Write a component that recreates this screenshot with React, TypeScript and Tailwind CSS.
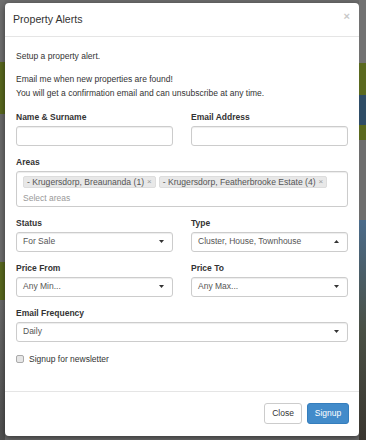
const AREAS = ["- Krugersdorp, Breaunanda (1)", "- Krugersdorp, Featherbrooke Estate (4)"];

function Caret({ up = false }: { up?: boolean }) {
  return (
    <svg width="5" height="3" viewBox="0 0 5 3" className="shrink-0">
      {up ? <path d="M0 3 L2.5 0 L5 3 Z" fill="#333" /> : <path d="M0 0 L5 0 L2.5 3 Z" fill="#333" />}
    </svg>
  );
}

function Label({ children }: { children: React.ReactNode }) {
  return <label className="mb-[3px] block text-[8.5px] font-bold leading-[12px] text-[#333]">{children}</label>;
}

function TextInput() {
  return <div className="h-[20px] rounded-[3px] border border-[#ccc] bg-white shadow-[inset_0_1px_1px_rgba(0,0,0,0.075)]" />;
}

function SelectBox({ value, up = false }: { value: string; up?: boolean }) {
  return (
    <div className="flex h-[20px] items-center justify-between rounded-[3px] border border-[#ccc] bg-white pl-[6px] pr-[8px] text-[8.5px] text-[#555] shadow-[inset_0_1px_1px_rgba(0,0,0,0.075)]">
      <span>{value}</span>
      <Caret up={up} />
    </div>
  );
}

function Field({ label, children }: { label: string; children: React.ReactNode }) {
  return (
    <div className="mb-[10px]">
      <Label>{label}</Label>
      {children}
    </div>
  );
}

// dimmed page behind the modal, only a few px show on each side
function Backdrop({ side }: { side: "left" | "right" }) {
  if (side === "left") {
    return (
      <div className="flex w-[5px] shrink-0 flex-col">
        <div className="h-[62px] bg-[#6f6f6f]" />
        <div className="h-[52px] bg-[#5a691f]" />
        <div className="h-[36px] bg-[#6a6a6a]" />
        <div className="h-[112px] bg-[#6d6d6d]" />
        <div className="h-[38px] bg-[#5a691f]" />
        <div className="flex-1 bg-gradient-to-b from-[#6a6a6a] to-[#505050]" />
      </div>
    );
  }
  return (
    <div className="flex flex-1 flex-col">
      <div className="h-[63px] bg-[#727272]" />
      <div className="h-[32px] bg-[#5a691f]" />
      <div className="h-[30px] bg-[#2f4d66]" />
      <div className="h-[15px] bg-[#5a691f]" />
      <div className="h-[80px] bg-[#6e6e6e]" />
      <div className="flex-1 bg-gradient-to-b from-[#4b6b8a] via-[#4a5045] to-[#3a3630]" />
    </div>
  );
}

export default function App() {
  return (
    <div className="flex h-[440px] w-[366px] overflow-hidden bg-[#6c6c6c] font-['Liberation_Sans',Arial,sans-serif]">
      <Backdrop side="left" />
      <div className="mt-[3px] flex h-[433px] w-[354px] shrink-0 flex-col rounded-[4px] bg-white shadow-[0_2px_6px_rgba(0,0,0,0.5)]">
        <div className="flex h-[34px] shrink-0 items-center justify-between border-b border-[#e5e5e5] pl-[8px] pr-[9px]">
          <h4 className="text-[10.6px] leading-[13px] text-[#333]">Property Alerts</h4>
          <button type="button" className="-mt-[6px] text-[11px] font-bold leading-none text-[#c8c8c8]">
            ×
          </button>
        </div>

        <div className="flex-1 px-[11px] pt-[13px] text-[8.5px] leading-[13.3px] text-[#333]">
          <p className="mb-[10px]">Setup a property alert.</p>
          <p className="mb-[11px]">
            Email me when new properties are found!
            <br />
            You will get a confirmation email and can unsubscribe at any time.
          </p>

          <div className="grid grid-cols-2 gap-x-[18px]">
            <Field label="Name & Surname">
              <TextInput />
            </Field>
            <Field label="Email Address">
              <TextInput />
            </Field>
          </div>

          <Field label="Areas">
            <div className="h-[36px] rounded-[3px] border border-[#ccc] bg-white pl-[6px] pt-[4px] shadow-[inset_0_1px_1px_rgba(0,0,0,0.075)]">
              <div className="flex gap-[3px]">
                {AREAS.map((a) => (
                  <span
                    key={a}
                    className="flex h-[12px] items-center gap-[3px] rounded-[2px] border border-[#ddd] bg-[#e8e8e8] px-[3px] text-[8.6px] leading-none text-[#555]"
                  >
                    {a}
                    <span className="text-[8px] text-[#999]">×</span>
                  </span>
                ))}
              </div>
              <div className="mt-[4px] text-[8.5px] leading-[13px] text-[#999]">Select areas</div>
            </div>
          </Field>

          <div className="grid grid-cols-2 gap-x-[18px]">
            <Field label="Status">
              <SelectBox value="For Sale" />
            </Field>
            <Field label="Type">
              <SelectBox value="Cluster, House, Townhouse" up />
            </Field>
            <Field label="Price From">
              <SelectBox value="Any Min..." />
            </Field>
            <Field label="Price To">
              <SelectBox value="Any Max..." />
            </Field>
          </div>

          <Field label="Email Frequency">
            <SelectBox value="Daily" />
          </Field>

          <label className="flex items-center gap-[5px] leading-[14px]">
            <span className="h-[8px] w-[8px] rounded-[2px] border border-[#aaa] bg-[#e6e6e6]" />
            <span className="text-[8.5px] text-[#333]">Signup for newsletter</span>
          </label>
        </div>

        <div className="flex h-[45px] shrink-0 items-start justify-end gap-[5px] border-t border-[#e5e5e5] pr-[10px] pt-[11px]">
          <button
            type="button"
            className="h-[21px] w-[38px] rounded-[3px] border border-[#ccc] bg-white text-[8.5px] text-[#333]"
          >
            Close
          </button>
          <button
            type="button"
            className="h-[21px] w-[42px] rounded-[3px] border border-[#357ebd] bg-[#428bca] text-[8.5px] text-white"
          >
            Signup
          </button>
        </div>
      </div>
      <Backdrop side="right" />
    </div>
  );
}
